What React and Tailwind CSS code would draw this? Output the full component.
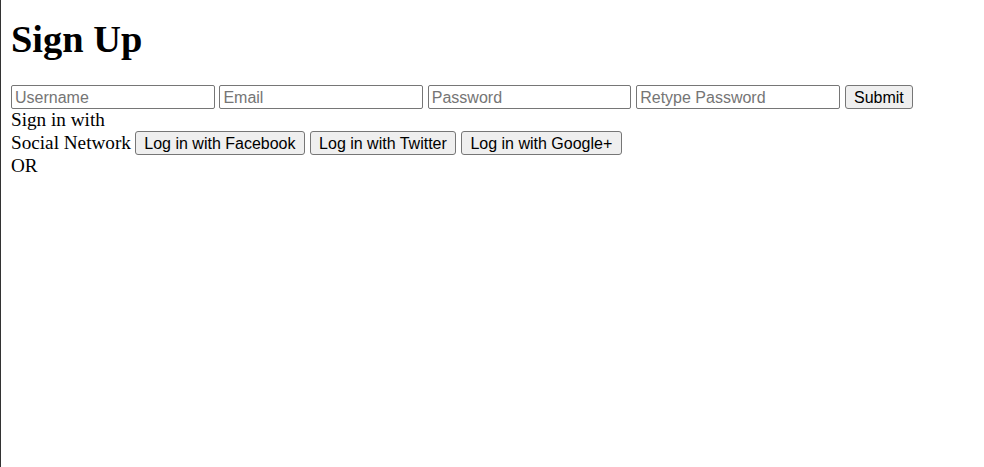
import React from "react";

const inputCls =
  "w-[203.6px] h-[24px] px-[3px] pt-[1px] border border-[#767676] rounded-[2px] bg-white text-[16px] text-black placeholder:text-[#757575] outline-none";
const btnCls =
  "h-[24px] px-[8.4px] pt-[1px] border border-[#767676] rounded-[3px] bg-[#efefef] text-[16px] text-black leading-none font-['Liberation_Sans',Arial,sans-serif]";

const App = () => {
  return (
    <div className="min-h-[467px] border-l border-[#333] pl-[10px] bg-white text-black font-['Liberation_Serif',serif] text-[19.2px]">
      <h1 className="pt-[17px] text-[38.4px] font-bold leading-[44px]">Sign Up</h1>

      <form className="mt-[24px] font-['Liberation_Sans',Arial,sans-serif]">
        <div className="flex items-center gap-[4.8px] h-[24px]">
          <input type="text" placeholder="Username" className={inputCls} />
          <input type="email" placeholder="Email" className={inputCls} />
          <input type="password" placeholder="Password" className={inputCls} />
          <input type="password" placeholder="Retype Password" className={inputCls} />
          <button type="button" className={btnCls}>Submit</button>
        </div>
      </form>

      <div className="leading-[22px]">Sign in with</div>
      <div className="flex items-center gap-[4.8px] h-[24px]">
        <span className="leading-[22px] mr-[-0.8px]">Social Network</span>
        <button className={btnCls}>Log in with Facebook</button>
        <button className={btnCls}>Log in with Twitter</button>
        <button className={btnCls}>Log in with Google+</button>
      </div>
      <div className="leading-[22px]">OR</div>
    </div>
  );
};

export default App;
